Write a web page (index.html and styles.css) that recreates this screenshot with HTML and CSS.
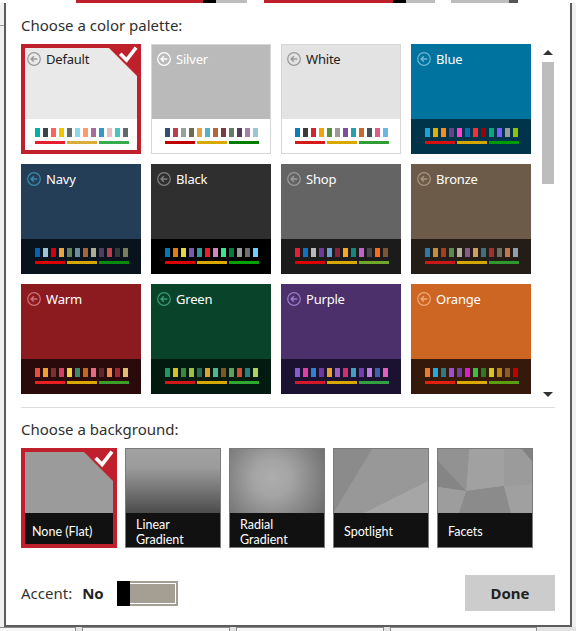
FILE: index.html
```html
<!DOCTYPE html>
<html lang="en">
<head>
<meta charset="utf-8">
<title>Choose a color palette</title>
<link rel="stylesheet" href="styles.css">
</head>
<body>
<div class="top-strip">
  <span class="seg w76 c-white"></span><span class="seg w127 c-red"></span><span class="seg w13 c-black"></span><span class="seg w31 c-gray"></span><span class="seg w17 c-white"></span><span class="seg w129 c-red"></span><span class="seg w13 c-black"></span><span class="seg w29 c-gray"></span><span class="seg w16 c-white"></span><span class="seg w58 c-gray"></span><span class="seg w9 c-dark"></span><span class="seg grow c-white"></span>
</div>
<div class="middle">
  <div class="side-left"><div class="side-line"></div></div>
  <div class="dialog">
    <h2 class="heading">Choose a color palette:</h2>
    <div class="palette-area">
      <div class="palette-grid">
        <div class="tile t-default selected">
          <div class="tile-top"><span class="tile-label"><svg class="back-icon" viewBox="0 0 14 14"><circle cx="7" cy="7" r="6.3"/><path d="M10.3 7H4.2M6.8 4.3 4.1 7l2.7 2.7"/></svg>Default</span></div>
          <div class="tile-bottom">
            <div class="swatches"><i style="background:#00b3a4"></i><i style="background:#3b4446"></i><i style="background:#ff625e"></i><i style="background:#f5c500"></i><i style="background:#5f6a6b"></i><i style="background:#8fd6ee"></i><i style="background:#ff9a6a"></i><i style="background:#a56c9e"></i><i style="background:#3498c0"></i><i style="background:#e4c0c3"></i><i style="background:#44c7bc"></i><i style="background:#606969"></i></div>
            <div class="bars"><i style="background:#e41f2f"></i><i style="background:#dbac38"></i><i style="background:#35ad4d"></i></div>
          </div>
          <svg class="check" viewBox="0 0 36 36"><polygon points="0,0 36,0 36,36"/><polyline points="16.5,11 21.5,16 30,5"/></svg>
        </div>
        <div class="tile t-silver">
          <div class="tile-top"><span class="tile-label"><svg class="back-icon" viewBox="0 0 14 14"><circle cx="7" cy="7" r="6.3"/><path d="M10.3 7H4.2M6.8 4.3 4.1 7l2.7 2.7"/></svg>Silver</span></div>
          <div class="tile-bottom">
            <div class="swatches"><i style="background:#2f4f73"></i><i style="background:#bc3d4b"></i><i style="background:#969fa2"></i><i style="background:#6e6b53"></i><i style="background:#e9a144"></i><i style="background:#56b1c4"></i><i style="background:#b86338"></i><i style="background:#7c3c3f"></i><i style="background:#627d5f"></i><i style="background:#533d5d"></i><i style="background:#a67fa5"></i><i style="background:#9dc6d4"></i></div>
            <div class="bars"><i style="background:#c00000"></i><i style="background:#d8a900"></i><i style="background:#007c00"></i></div>
          </div>
        </div>
        <div class="tile t-white">
          <div class="tile-top"><span class="tile-label"><svg class="back-icon" viewBox="0 0 14 14"><circle cx="7" cy="7" r="6.3"/><path d="M10.3 7H4.2M6.8 4.3 4.1 7l2.7 2.7"/></svg>White</span></div>
          <div class="tile-bottom">
            <div class="swatches"><i style="background:#0f7cb6"></i><i style="background:#3a3a3a"></i><i style="background:#d5242f"></i><i style="background:#f0a30a"></i><i style="background:#5b8f3c"></i><i style="background:#9a9a9a"></i><i style="background:#7a4f9c"></i><i style="background:#25a0a8"></i><i style="background:#c46a2c"></i><i style="background:#444f5a"></i><i style="background:#e05a8a"></i><i style="background:#6cb9e0"></i></div>
            <div class="bars"><i style="background:#d41a1a"></i><i style="background:#d9a800"></i><i style="background:#2f9e35"></i></div>
          </div>
        </div>
        <div class="tile t-blue">
          <div class="tile-top"><span class="tile-label"><svg class="back-icon" viewBox="0 0 14 14"><circle cx="7" cy="7" r="6.3"/><path d="M10.3 7H4.2M6.8 4.3 4.1 7l2.7 2.7"/></svg>Blue</span></div>
          <div class="tile-bottom">
            <div class="swatches"><i style="background:#17a6d9"></i><i style="background:#ddb000"></i><i style="background:#ff8a1c"></i><i style="background:#6b3f88"></i><i style="background:#ff40d1"></i><i style="background:#0d6ba9"></i><i style="background:#ff2c33"></i><i style="background:#a00000"></i><i style="background:#00ac7f"></i><i style="background:#7d5dff"></i><i style="background:#9c9c9c"></i><i style="background:#8cc500"></i></div>
            <div class="bars"><i style="background:#d91010"></i><i style="background:#d5a500"></i><i style="background:#009b00"></i></div>
          </div>
        </div>
        <div class="tile t-navy">
          <div class="tile-top"><span class="tile-label"><svg class="back-icon" viewBox="0 0 14 14"><circle cx="7" cy="7" r="6.3"/><path d="M10.3 7H4.2M6.8 4.3 4.1 7l2.7 2.7"/></svg>Navy</span></div>
          <div class="tile-bottom">
            <div class="swatches"><i style="background:#0064b2"></i><i style="background:#9cc5d4"></i><i style="background:#d2000c"></i><i style="background:#e9a445"></i><i style="background:#648061"></i><i style="background:#6c8f9f"></i><i style="background:#a96236"></i><i style="background:#aaaf93"></i><i style="background:#503c61"></i><i style="background:#b83d4b"></i><i style="background:#373737"></i><i style="background:#7c7b5e"></i></div>
            <div class="bars"><i style="background:#dc0000"></i><i style="background:#d4a800"></i><i style="background:#0b8b0b"></i></div>
          </div>
        </div>
        <div class="tile t-black">
          <div class="tile-top"><span class="tile-label"><svg class="back-icon" viewBox="0 0 14 14"><circle cx="7" cy="7" r="6.3"/><path d="M10.3 7H4.2M6.8 4.3 4.1 7l2.7 2.7"/></svg>Black</span></div>
          <div class="tile-bottom">
            <div class="swatches"><i style="background:#0079b5"></i><i style="background:#e17e11"></i><i style="background:#e5d441"></i><i style="background:#7b57b4"></i><i style="background:#2d9ba1"></i><i style="background:#e91c2f"></i><i style="background:#d185c1"></i><i style="background:#3edd98"></i><i style="background:#007b3e"></i><i style="background:#9b9b9b"></i><i style="background:#6e6e6e"></i><i style="background:#6dcff6"></i></div>
            <div class="bars"><i style="background:#dd0000"></i><i style="background:#d9a900"></i><i style="background:#00a100"></i></div>
          </div>
        </div>
        <div class="tile t-shop">
          <div class="tile-top"><span class="tile-label"><svg class="back-icon" viewBox="0 0 14 14"><circle cx="7" cy="7" r="6.3"/><path d="M10.3 7H4.2M6.8 4.3 4.1 7l2.7 2.7"/></svg>Shop</span></div>
          <div class="tile-bottom">
            <div class="swatches"><i style="background:#e91c38"></i><i style="background:#1271c1"></i><i style="background:#b9b9b9"></i><i style="background:#6c3b97"></i><i style="background:#6b9ed1"></i><i style="background:#8b203c"></i><i style="background:#f6a724"></i><i style="background:#12867b"></i><i style="background:#c661c9"></i><i style="background:#484848"></i><i style="background:#ff6b15"></i><i style="background:#7b5532"></i></div>
            <div class="bars"><i style="background:#dd0000"></i><i style="background:#d8a900"></i><i style="background:#6ea72c"></i></div>
          </div>
        </div>
        <div class="tile t-bronze">
          <div class="tile-top"><span class="tile-label"><svg class="back-icon" viewBox="0 0 14 14"><circle cx="7" cy="7" r="6.3"/><path d="M10.3 7H4.2M6.8 4.3 4.1 7l2.7 2.7"/></svg>Bronze</span></div>
          <div class="tile-bottom">
            <div class="swatches"><i style="background:#2a7ab0"></i><i style="background:#c09040"></i><i style="background:#a04020"></i><i style="background:#5a8a50"></i><i style="background:#b0b0a0"></i><i style="background:#8a5a8a"></i><i style="background:#d0a060"></i><i style="background:#407080"></i><i style="background:#a03030"></i><i style="background:#707060"></i><i style="background:#c07850"></i><i style="background:#90a0b0"></i></div>
            <div class="bars"><i style="background:#c81818"></i><i style="background:#d3a600"></i><i style="background:#2e9a2e"></i></div>
          </div>
        </div>
        <div class="tile t-warm">
          <div class="tile-top"><span class="tile-label"><svg class="back-icon" viewBox="0 0 14 14"><circle cx="7" cy="7" r="6.3"/><path d="M10.3 7H4.2M6.8 4.3 4.1 7l2.7 2.7"/></svg>Warm</span></div>
          <div class="tile-bottom">
            <div class="swatches"><i style="background:#e8503a"></i><i style="background:#f0a030"></i><i style="background:#7a3030"></i><i style="background:#d04060"></i><i style="background:#f6d040"></i><i style="background:#3a8a70"></i><i style="background:#c06a20"></i><i style="background:#e86a80"></i><i style="background:#5a2a2a"></i><i style="background:#f08a50"></i><i style="background:#a02830"></i><i style="background:#e0c070"></i></div>
            <div class="bars"><i style="background:#e82020"></i><i style="background:#d9a800"></i><i style="background:#3a9e2a"></i></div>
          </div>
        </div>
        <div class="tile t-green">
          <div class="tile-top"><span class="tile-label"><svg class="back-icon" viewBox="0 0 14 14"><circle cx="7" cy="7" r="6.3"/><path d="M10.3 7H4.2M6.8 4.3 4.1 7l2.7 2.7"/></svg>Green</span></div>
          <div class="tile-bottom">
            <div class="swatches"><i style="background:#1e9a60"></i><i style="background:#d8c020"></i><i style="background:#3a8a3a"></i><i style="background:#a0c040"></i><i style="background:#2a6a50"></i><i style="background:#e0a030"></i><i style="background:#4ab890"></i><i style="background:#7a5a20"></i><i style="background:#60a060"></i><i style="background:#d05030"></i><i style="background:#2a8080"></i><i style="background:#b0d060"></i></div>
            <div class="bars"><i style="background:#d01818"></i><i style="background:#d8a800"></i><i style="background:#2ea82e"></i></div>
          </div>
        </div>
        <div class="tile t-purple">
          <div class="tile-top"><span class="tile-label"><svg class="back-icon" viewBox="0 0 14 14"><circle cx="7" cy="7" r="6.3"/><path d="M10.3 7H4.2M6.8 4.3 4.1 7l2.7 2.7"/></svg>Purple</span></div>
          <div class="tile-bottom">
            <div class="swatches"><i style="background:#8a5ad0"></i><i style="background:#e040a0"></i><i style="background:#3080d0"></i><i style="background:#6a3aa0"></i><i style="background:#e8a030"></i><i style="background:#a060c0"></i><i style="background:#d03070"></i><i style="background:#40a0c0"></i><i style="background:#7040b0"></i><i style="background:#c080e0"></i><i style="background:#4060b0"></i><i style="background:#e060c0"></i></div>
            <div class="bars"><i style="background:#d41a2a"></i><i style="background:#d8a800"></i><i style="background:#30a040"></i></div>
          </div>
        </div>
        <div class="tile t-orange">
          <div class="tile-top"><span class="tile-label"><svg class="back-icon" viewBox="0 0 14 14"><circle cx="7" cy="7" r="6.3"/><path d="M10.3 7H4.2M6.8 4.3 4.1 7l2.7 2.7"/></svg>Orange</span></div>
          <div class="tile-bottom">
            <div class="swatches"><i style="background:#e97b2d"></i><i style="background:#21a9e1"></i><i style="background:#2e7b81"></i><i style="background:#9b50d1"></i><i style="background:#6c40a1"></i><i style="background:#d91fd1"></i><i style="background:#3dbb4b"></i><i style="background:#297b1f"></i><i style="background:#d7c71d"></i><i style="background:#b9870c"></i><i style="background:#8c5b2c"></i><i style="background:#c10000"></i></div>
            <div class="bars"><i style="background:#e1200f"></i><i style="background:#d9a900"></i><i style="background:#5b9f11"></i></div>
          </div>
        </div>
      </div>
      <div class="scrollbar">
        <span class="arrow-up"></span>
        <div class="thumb"></div>
        <span class="arrow-down"></span>
      </div>
    </div>
    <div class="sep"></div>
    <h2 class="heading heading-bg">Choose a background:</h2>
    <div class="bg-row">
      <div class="bg-tile selected">
        <div class="bg-img bg-flat"></div>
        <div class="bg-label">None (Flat)</div>
        <svg class="check bg-check" viewBox="0 0 36 36"><polygon points="0,0 36,0 36,36"/><polyline points="16.5,11 21.5,16 30,5"/></svg>
      </div>
      <div class="bg-tile">
        <div class="bg-img bg-linear"></div>
        <div class="bg-label">Linear<br>Gradient</div>
      </div>
      <div class="bg-tile">
        <div class="bg-img bg-radial"></div>
        <div class="bg-label">Radial<br>Gradient</div>
      </div>
      <div class="bg-tile">
        <svg class="bg-img" viewBox="0 0 94 64" preserveAspectRatio="none"><rect width="94" height="64" fill="#989898"/><polygon points="0,0 38,0 0,63" fill="#8b8b8b"/><polygon points="94,32 94,64 30,64" fill="#a6a6a6"/></svg>
        <div class="bg-label">Spotlight</div>
      </div>
      <div class="bg-tile">
        <svg class="bg-img" viewBox="0 0 94 64" preserveAspectRatio="none"><rect width="94" height="64" fill="#949494"/><polygon points="31,0 66,0 66,37 28,42" fill="#a1a1a1"/><polygon points="0,0 31,0 28,42 0,12" fill="#929292"/><polygon points="0,12 28,42 0,38" fill="#858585"/><polygon points="66,0 84,0 94,12 94,35 66,37" fill="#9b9b9b"/><polygon points="84,0 94,0 94,12" fill="#818181"/><polygon points="28,42 66,37 73,64 21,64" fill="#8b8b8b"/><polygon points="0,38 28,42 21,64 0,64" fill="#9d9d9d"/><polygon points="66,37 94,35 94,64 73,64" fill="#a0a0a0"/></svg>
        <div class="bg-label">Facets</div>
      </div>
    </div>
    <div class="footer">
      <span class="accent-label">Accent:</span>
      <span class="accent-value">No</span>
      <div class="toggle"><div class="knob"></div><div class="track"><div class="track-fill"></div></div></div>
      <button class="done">Done</button>
    </div>
  </div>
  <div class="side-right"></div>
</div>
<div class="bottom-strip">
  <span class="bbox b76"></span><span class="bbox b148"></span><span class="bbox b148"></span><span class="bbox b147"></span>
</div>
</body>
</html>
```

FILE: styles.css
```css
* { box-sizing: border-box; }
html, body { margin: 0; padding: 0; }
body {
  width: 576px;
  height: 631px;
  overflow: hidden;
  background: #ececec;
  font-family: "Noto Sans", "Open Sans", sans-serif;
  color: #2b2b2b;
  display: flex;
  flex-direction: column;
}

/* strip of the window behind */
.top-strip { height: 3px; display: flex; flex: none; }
.seg { height: 3px; flex: none; }
.seg.grow { flex: 1; }
.w76 { width: 76px; } .w127 { width: 127px; } .w13 { width: 13px; } .w31 { width: 31px; }
.w17 { width: 17px; } .w129 { width: 129px; } .w29 { width: 29px; } .w16 { width: 16px; }
.w58 { width: 58px; } .w9 { width: 9px; }
.c-white { background: #ffffff; } .c-red { background: #c0202b; } .c-black { background: #000; }
.c-gray { background: #bdbdbd; } .c-dark { background: #555; }

.middle { display: flex; height: 624px; flex: none; }
.side-left { width: 4px; background: #f0f0f0; }
.side-line { margin-top: 22px; height: 1px; background: #9a9a9a; }
.side-right { flex: 1; background: #f0f0f0; }

.dialog {
  width: 568px;
  background: #fff;
  border: 2px solid #5c5c5c;
  border-top: none;
  padding: 12px 0 0 15px;
  display: flex;
  flex-direction: column;
}

.heading {
  margin: 0;
  font-size: 15px;
  line-height: 20px;
  font-weight: 400;
  color: #2f2f2f;
}

.palette-area { margin-top: 9px; height: 356px; display: flex; gap: 10px; }
.palette-grid {
  width: 510px;
  display: grid;
  grid-template-columns: repeat(4, 120px);
  grid-auto-rows: 110px;
  gap: 10px;
  align-content: start;
  overflow: hidden;
}

.tile { position: relative; display: flex; flex-direction: column; }
.tile-top { height: 75px; padding: 6px 0 0 6px; background: var(--top); }
.tile-bottom { flex: 1; padding: 9px 0 0 14px; background: var(--bottom); }
.tile-label {
  display: flex;
  align-items: center;
  gap: 5px;
  font-size: 13px;
  line-height: 18px;
  letter-spacing: -0.2px;
  color: var(--text, #fff);
}
.back-icon { width: 14px; height: 14px; flex: none; fill: none; stroke: var(--icon); stroke-width: 1.2; }
.back-icon path { stroke-width: 1.4; }
.swatches { display: flex; gap: 3px; }
.swatches i { display: block; width: 5px; height: 9px; }
.bars { display: flex; gap: 2px; margin-top: 4px; }
.bars i { display: block; width: 30px; height: 3px; }

.tile.selected::after {
  content: "";
  position: absolute;
  inset: 0;
  border: 4px solid #c0202b;
}
.check { position: absolute; top: 0; right: 0; width: 36px; height: 36px; z-index: 1; }
.check polygon { fill: #c0202b; }
.check polyline { fill: none; stroke: #fff; stroke-width: 3.6; stroke-linecap: square; }

.t-default { --top: #e9e9e9; --bottom: #fff; --text: #222; --icon: #9a9a9a; }
.t-silver { --top: #bababa; --bottom: #fff; --text: #fff; --icon: #fff; outline: 1px solid #d6d6d6; outline-offset: -1px; }
.t-white { --top: #e3e3e3; --bottom: #fff; --text: #222; --icon: #9a9a9a; outline: 1px solid #d6d6d6; outline-offset: -1px; }
.t-blue { --top: #00739e; --bottom: #00344b; --icon: #6db6d4; }
.t-navy { --top: #243e58; --bottom: #08131d; --icon: #3d89aa; }
.t-black { --top: #2f2f2f; --bottom: #000; --icon: #808080; }
.t-shop { --top: #646464; --bottom: #1b1b1b; --icon: #9a9a9a; }
.t-bronze { --top: #6c5b48; --bottom: #241d17; --icon: #a8957f; }
.t-warm { --top: #8c1b20; --bottom: #2b0a0c; --icon: #d07078; }
.t-green { --top: #09432a; --bottom: #031a10; --icon: #3d9a70; }
.t-purple { --top: #4b306b; --bottom: #1b1131; --icon: #9a7ac8; }
.t-orange { --top: #cd6523; --bottom: #351a0b; --icon: #f0a878; }

.scrollbar {
  width: 14px;
  display: flex;
  flex-direction: column;
  align-items: center;
  padding: 6px 0 3px;
}
.arrow-up { width: 0; height: 0; border-left: 5px solid transparent; border-right: 5px solid transparent; border-bottom: 5px solid #333; }
.thumb { margin-top: 7px; width: 12px; height: 122px; background: #bdbdbd; }
.arrow-down { margin-top: auto; width: 0; height: 0; border-left: 5px solid transparent; border-right: 5px solid transparent; border-top: 5px solid #333; }

.sep { margin-top: 7px; width: 534px; height: 1px; background: #dcdcdc; flex: none; }
.heading-bg { margin-top: 11px; }

.bg-row { margin-top: 9px; display: flex; gap: 8px; }
.bg-tile {
  position: relative;
  width: 96px;
  height: 100px;
  border: 1px solid #7a7a7a;
  display: flex;
  flex-direction: column;
}
.bg-img { display: block; width: 94px; height: 64px; flex: none; }
.bg-flat { background: #9b9b9b; }
.bg-linear { background: linear-gradient(#a2a2a2 0%, #9b9b9b 30%, #4c4c4c 100%); }
.bg-radial { background: radial-gradient(circle at 45% 45%, #adadad 0%, #a4a4a4 30%, #6c6c6c 100%); }
.bg-label {
  flex: 1;
  background: #111;
  color: #fff;
  font-family: Lato, "Noto Sans", sans-serif;
  font-size: 12.5px;
  line-height: 15px;
  padding: 3px 0 0 10px;
  display: flex;
  align-items: center;
}
.bg-tile.selected { border-color: #c0202b; }
.bg-tile.selected::after {
  content: "";
  position: absolute;
  inset: 0;
  border: 3px solid #c0202b;
}
.bg-check { top: -1px; right: -1px; width: 37px; height: 37px; }

.footer { margin-top: 27px; height: 36px; display: flex; align-items: center; }
.accent-label { font-size: 15px; color: #333; }
.accent-value { font-size: 15px; font-weight: 700; color: #222; margin-left: 10px; }
.toggle { margin-left: 13px; width: 61px; height: 25px; display: flex; }
.knob { width: 13px; background: #000; }
.track { flex: 1; border: 2px solid #a59e93; border-left: 0; padding: 1px 1px 1px 0; background: #fff; }
.track-fill { height: 100%; background: #a59e93; }
.done {
  margin-left: auto;
  margin-right: 15px;
  width: 90px;
  height: 36px;
  border: none;
  background: #cccccc;
  font-family: "Noto Sans", "Open Sans", sans-serif;
  font-size: 15px;
  font-weight: 700;
  color: #222;
}

.bottom-strip { height: 4px; display: flex; gap: 6px; background: #e2e2e2; flex: none; }
.bbox { height: 4px; background: #f6f6f6; border: 1px solid #8a8a8a; border-bottom: none; }
.b76 { width: 76px; border-left: none; } .b148 { width: 148px; } .b147 { width: 147px; }
```
